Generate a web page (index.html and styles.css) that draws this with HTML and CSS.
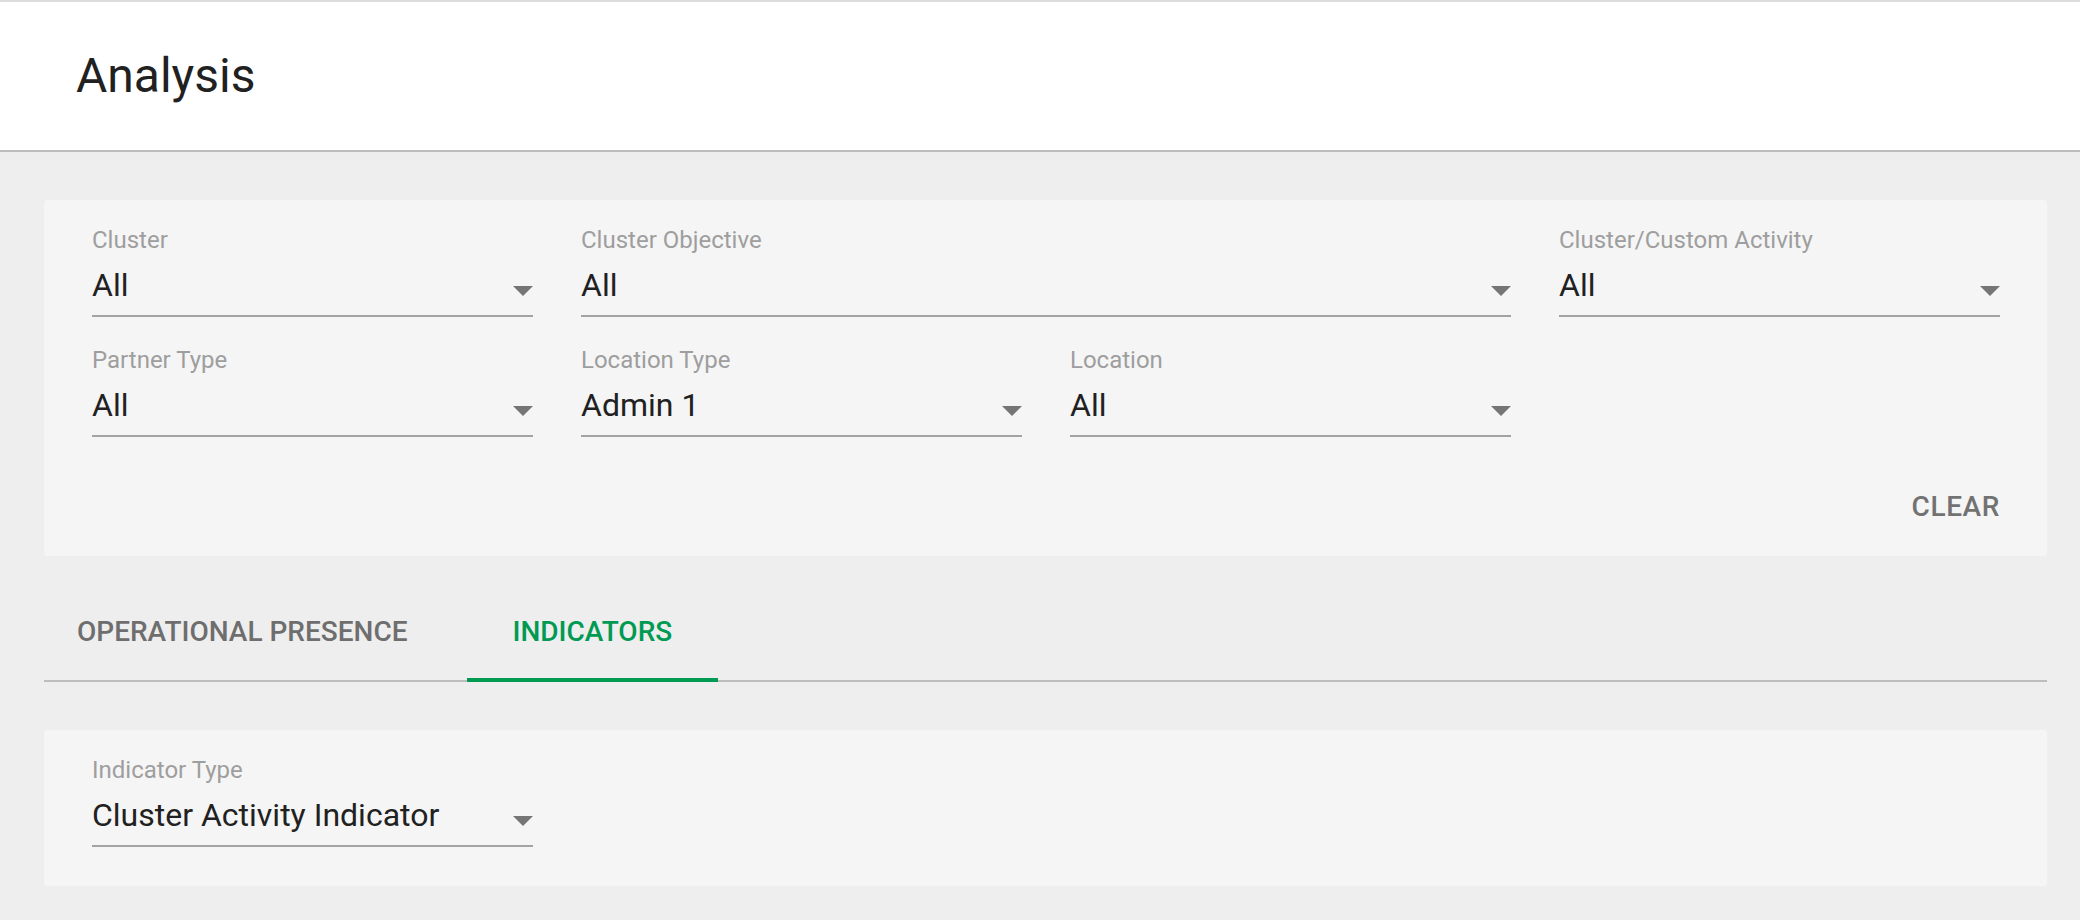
FILE: index.html
```html
<!DOCTYPE html>
<html lang="en">
<head>
<meta charset="utf-8">
<title>Analysis</title>
<link rel="stylesheet" href="styles.css">
</head>
<body>
<header class="page-header">
  <h1 class="page-title">Analysis</h1>
</header>
<main class="page-content">
  <section class="card card-filters">
    <div class="filter-grid">
      <div class="field">
        <div class="field-label">Cluster</div>
        <div class="field-input"><span class="field-value">All</span><span class="caret"></span></div>
      </div>
      <div class="field field-wide">
        <div class="field-label">Cluster Objective</div>
        <div class="field-input"><span class="field-value">All</span><span class="caret"></span></div>
      </div>
      <div class="field">
        <div class="field-label">Cluster/Custom Activity</div>
        <div class="field-input"><span class="field-value">All</span><span class="caret"></span></div>
      </div>
      <div class="field">
        <div class="field-label">Partner Type</div>
        <div class="field-input"><span class="field-value">All</span><span class="caret"></span></div>
      </div>
      <div class="field">
        <div class="field-label">Location Type</div>
        <div class="field-input"><span class="field-value">Admin 1</span><span class="caret"></span></div>
      </div>
      <div class="field">
        <div class="field-label">Location</div>
        <div class="field-input"><span class="field-value">All</span><span class="caret"></span></div>
      </div>
    </div>
    <div class="card-actions">
      <button class="btn-clear" type="button">CLEAR</button>
    </div>
  </section>

  <nav class="tabs">
    <div class="tab tab-first">OPERATIONAL PRESENCE</div>
    <div class="tab tab-active">INDICATORS</div>
  </nav>

  <section class="card card-indicator">
    <div class="filter-grid">
      <div class="field">
        <div class="field-label">Indicator Type</div>
        <div class="field-input"><span class="field-value">Cluster Activity Indicator</span><span class="caret"></span></div>
      </div>
    </div>
  </section>
</main>
</body>
</html>
```

FILE: styles.css
```css
* {
  box-sizing: border-box;
}

html, body {
  margin: 0;
  padding: 0;
}

body {
  background: #eeeeee;
  font-family: Roboto, "Noto Sans", "Liberation Sans", sans-serif;
  color: #212121;
  min-height: 920px;
}

.page-header {
  background: #ffffff;
  border-top: 2px solid #dcdcdc;
  border-bottom: 2px solid #bdbdbd;
  padding: 46px 76px 46px 76px;
}

.page-title {
  margin: 0;
  font-size: 48px;
  line-height: 56px;
  font-weight: 400;
  color: #212121;
}

.page-content {
  padding: 48px 33px 0 44px;
}

.card {
  background: #f5f5f5;
  border-radius: 3px;
  padding: 26px 47px 39px 48px;
}

.card-filters {
  padding-bottom: 33px;
}

.filter-grid {
  display: grid;
  grid-template-columns: repeat(4, 1fr);
  column-gap: 48px;
  row-gap: 29px;
}

.field-wide {
  grid-column: span 2;
}

.field-label {
  font-size: 24px;
  line-height: 28px;
  color: #9e9e9e;
  white-space: nowrap;
}

.field-input {
  margin-top: 11px;
  display: flex;
  justify-content: space-between;
  align-items: flex-start;
  padding-bottom: 10px;
  border-bottom: 2px solid #a3a3a3;
}

.field-value {
  font-size: 32px;
  line-height: 40px;
  color: #212121;
  white-space: nowrap;
}

.caret {
  flex: none;
  width: 0;
  height: 0;
  margin-top: 21px;
  border-left: 10px solid transparent;
  border-right: 10px solid transparent;
  border-top: 10px solid #757575;
}

.card-actions {
  display: flex;
  justify-content: flex-end;
  margin-top: 54px;
}

.btn-clear {
  background: none;
  border: 0;
  padding: 0;
  margin: 0;
  font-family: Roboto, "Noto Sans", "Liberation Sans", sans-serif;
  font-size: 28px;
  line-height: 32px;
  font-weight: 500;
  letter-spacing: 0.6px;
  color: #727272;
  cursor: pointer;
}

.tabs {
  display: flex;
  margin-top: 34px;
  box-shadow: inset 0 -2px 0 #bdbdbd;
}

.tab {
  height: 92px;
  padding: 26px 46px 0 46px;
  font-size: 28px;
  line-height: 32px;
  font-weight: 500;
  color: #6e6e6e;
  white-space: nowrap;
}

.tab-first {
  padding-left: 33px;
  padding-right: 59px;
}

.tab-active {
  color: #009a53;
  box-shadow: inset 0 -4px 0 #009a53;
}

.card-indicator {
  margin-top: 48px;
}
```
